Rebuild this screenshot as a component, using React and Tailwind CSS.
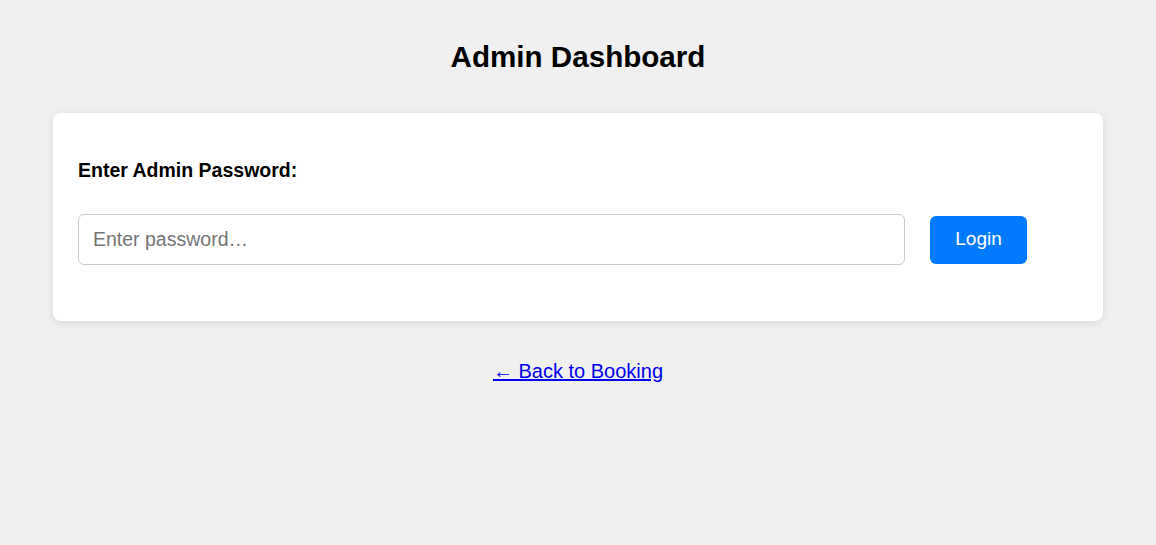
export default function App() {
  return (
    <div
      className="min-h-screen bg-[#f0f0f0] pt-[39px]"
      style={{ fontFamily: '"Liberation Sans", Arial, sans-serif' }}
    >
      <h1 className="text-center text-[29.6px] font-bold leading-[36px] text-black">
        Admin Dashboard
      </h1>

      <div className="mx-auto mt-[38px] w-[1050px] rounded-lg bg-white px-[25px] pt-[46px] pb-[56px] shadow-[0_2px_8px_rgba(0,0,0,0.1)]">
        <label className="block text-[19.5px] font-bold leading-[22px] text-black">
          Enter Admin Password:
        </label>
        <div className="mt-[33px] flex items-center">
          <input
            type="password"
            placeholder="Enter password…"
            className="h-[51px] w-[827px] rounded-md border border-[#ccc] px-[14px] text-[19.5px] text-black outline-none placeholder:text-[#757575]"
          />
          <button className="ml-[25px] h-[48px] w-[97px] rounded-md bg-[#007bff] text-[19px] text-white">
            Login
          </button>
        </div>
      </div>

      <div className="mt-[39px] text-center">
        <a href="#" className="text-[20px] leading-[22px] text-[#0000ee] underline">
          ← Back to Booking
        </a>
      </div>
    </div>
  );
}
